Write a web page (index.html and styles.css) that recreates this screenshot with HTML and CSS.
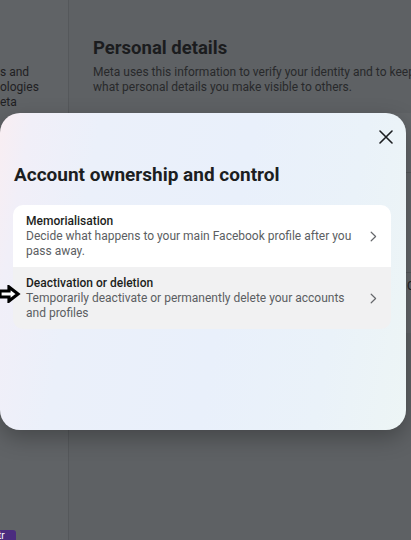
FILE: index.html
```html
<!DOCTYPE html>
<html lang="en">
<head>
<meta charset="utf-8">
<title>Account ownership and control</title>
<link rel="stylesheet" href="styles.css">
</head>
<body>
<div class="page">
  <aside class="side">
    <p>s and<br>ologies<br>eta</p>
  </aside>
  <main class="main">
    <h2>Personal details</h2>
    <p>Meta uses this information to verify your identity and to keep<br>what personal details you make visible to others.</p>
    <div class="bgcard">
      <div class="bgrow r1"></div>
      <div class="bgrow r2"></div>
      <div class="bgrow r3"><span class="bgtext">Contact info: settings</span></div>
    </div>
  </main>
</div>

<div class="modal">
  <div class="modal-top">
    <button class="close" aria-label="Close">
      <svg width="14" height="14" viewBox="0 0 14 14"><path d="M1 1L13 13M13 1L1 13" stroke="#1c1e21" stroke-width="1.6" stroke-linecap="round" fill="none"/></svg>
    </button>
  </div>
  <h1 class="modal-title">Account ownership and control</h1>
  <div class="list">
    <div class="item">
      <div class="item-text">
        <div class="item-title">Memorialisation</div>
        <div class="item-desc">Decide what happens to your main Facebook profile after you pass away.</div>
      </div>
      <svg class="chev" width="7" height="11" viewBox="0 0 7 11"><path d="M1.2 1.2L5.6 5.5L1.2 9.8" stroke="#65676b" stroke-width="1.2" fill="none" stroke-linecap="round" stroke-linejoin="round"/></svg>
    </div>
    <div class="item hover">
      <div class="item-text">
        <div class="item-title">Deactivation or deletion</div>
        <div class="item-desc">Temporarily deactivate or permanently delete your accounts and profiles</div>
      </div>
      <svg class="chev" width="7" height="11" viewBox="0 0 7 11"><path d="M1.2 1.2L5.6 5.5L1.2 9.8" stroke="#65676b" stroke-width="1.2" fill="none" stroke-linecap="round" stroke-linejoin="round"/></svg>
    </div>
  </div>
</div>

<svg class="cursor" width="22" height="18" viewBox="0 0 22 18"><polygon points="1,6 10,6 10,2 19,9 10,16 10,12 1,12" fill="#fff" stroke="#000" stroke-width="3.2" stroke-linejoin="miter"/></svg>

<div class="badge">tr</div>
</body>
</html>
```
FILE: styles.css
```css
* { box-sizing: border-box; }
html, body { margin: 0; padding: 0; }
body {
  width: 411px;
  height: 540px;
  overflow: hidden;
  position: relative;
  background: #5e6164;
  font-family: Roboto, "Noto Sans", "Liberation Sans", sans-serif;
}
.page {
  display: flex;
  height: 540px;
}
.side {
  width: 69px;
  flex: none;
  background: #606366;
  border-right: 1px solid #55585b;
  padding-top: 65px;
  overflow: hidden;
}
.side p {
  margin: 0;
  font-size: 12px;
  line-height: 15px;
  color: #1f2022;
}
.main {
  flex: none;
  width: 700px;
  padding: 37px 0 0 24px;
}
.main h2 {
  margin: 0;
  font-size: 18.5px;
  line-height: 22px;
  font-weight: 700;
  color: #1b1c1e;
}
.main p {
  margin: 6px 0 0;
  font-size: 12px;
  line-height: 15px;
  color: #28292b;
  white-space: nowrap;
}
.bgcard {
  margin-top: 18px;
  width: 600px;
  background: #636669;
  border-radius: 8px;
}
.bgrow { border-bottom: 1px solid #56595c; }
.r1 { height: 60px; }
.r2 { height: 100px; }
.r3 { height: 60px; border-bottom: 0; padding: 2px 0 0 314px; }
.bgtext { font-size: 12px; color: #1f2022; }

.modal {
  position: absolute;
  left: 0;
  top: 113px;
  width: 406px;
  height: 317px;
  border-radius: 20px;
  padding: 12px 15px 0 13px;
  background: linear-gradient(100deg, #f9eef2 0%, #f1eff8 7%, #ebf0fa 22%, #e9f0fb 55%, #eaf2f9 80%, #edf5f5 100%);
  box-shadow: 0 8px 22px rgba(0, 0, 0, 0.28);
}
.modal-top {
  display: flex;
  justify-content: flex-end;
}
.close {
  width: 24px;
  height: 24px;
  margin-right: -7px;
  padding: 0;
  border: 0;
  background: transparent;
  display: flex;
  align-items: center;
  justify-content: center;
}
.modal-title {
  margin: 14px 0 18px 1px;
  font-size: 19px;
  line-height: 24px;
  font-weight: 700;
  color: #1c1e21;
}
.list {
  border-radius: 10px;
  overflow: hidden;
}
.item {
  display: flex;
  align-items: center;
  padding: 8px 14px 8px 13px;
  background: #ffffff;
}
.item.hover { background: #f1f1f2; }
.item-text {
  flex: 1;
  margin-right: 14px;
}
.item-title {
  font-size: 12px;
  line-height: 16px;
  font-weight: 500;
  color: #1c1e21;
}
.item-desc {
  font-size: 12px;
  line-height: 15px;
  color: #5b5e62;
}
.chev { flex: none; }
.cursor {
  position: absolute;
  left: -1px;
  top: 285px;
}
.badge {
  position: absolute;
  left: 0;
  bottom: 0;
  width: 16px;
  height: 10px;
  background: #4b2c7f;
  border-top-right-radius: 3px;
  color: #fff;
  font-size: 10px;
  line-height: 12px;
  text-indent: -2px;
  overflow: hidden;
}
```
